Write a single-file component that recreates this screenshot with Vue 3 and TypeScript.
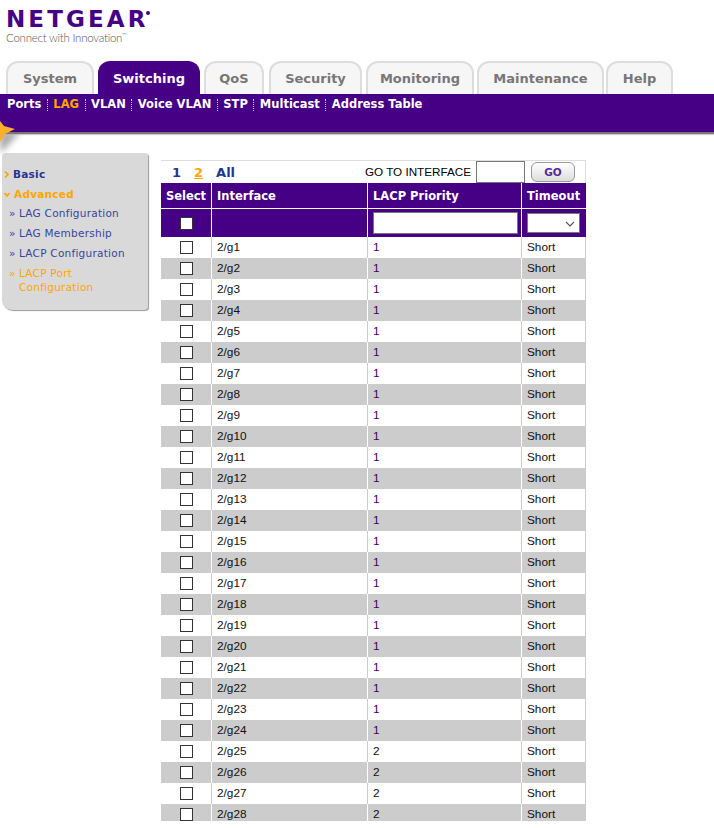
<script setup lang="ts">
interface Row { name: string; priority: number }
const rows: Row[] = Array.from({ length: 28 }, (_, i) => ({
  name: `2/g${i + 1}`,
  priority: i < 24 ? 1 : 2,
}))
const tabs = ['System', 'Switching', 'QoS', 'Security', 'Monitoring', 'Maintenance', 'Help']
const subs = ['Ports', 'LAG', 'VLAN', 'Voice VLAN', 'STP', 'Multicast', 'Address Table']
const links = ['LAG Configuration', 'LAG Membership', 'LACP Configuration']
</script>

<template>
  <div class="page">
    <header class="logo">
      <div class="brand">NETGEAR<i class="reg"></i></div>
      <div class="slogan">Connect with Innovation<sup>™</sup></div>
    </header>

    <nav class="tabs">
      <a v-for="t in tabs" :key="t" class="tab" :class="{ on: t === 'Switching' }">{{ t }}</a>
    </nav>
    <div class="bar">
      <template v-for="(s, i) in subs" :key="s">
        <span v-if="i" class="dot"></span>
        <a class="sub" :class="{ on: s === 'LAG' }">{{ s }}</a>
      </template>
    </div>
    <svg class="star" width="40" height="36" viewBox="0 0 40 36">
      <defs>
        <filter id="bl" x="-30%" y="-30%" width="160%" height="160%">
          <feGaussianBlur stdDeviation="3" />
        </filter>
        <clipPath id="below"><rect x="0" y="14" width="40" height="22" /></clipPath>
      </defs>
      <g clip-path="url(#below)">
        <path d="M0 12 L20 12 L4 30 L0 32 Z" fill="#aaa" filter="url(#bl)" />
      </g>
      <path d="M0 1 L4 6 L15 9 L5 14 L0 22 Z" fill="#f9ae2c" />
    </svg>

    <main class="main">
      <aside class="side">
        <div class="head"><svg class="mark" width="5" height="7" viewBox="0 0 5 7"><path d="M1 0.5 L4 3.5 L1 6.5" fill="none" stroke="#ffa500" stroke-width="1.6" /></svg>Basic</div>
        <div class="head active"><svg class="mark" width="6" height="5" viewBox="0 0 6 5"><path d="M0.5 1 L3 4 L5.5 1" fill="none" stroke="#ffa500" stroke-width="1.6" /></svg>Advanced</div>
        <a v-for="l in links" :key="l" class="link"><span class="raq">»</span><span>{{ l }}</span></a>
        <a class="link active"><span class="raq">»</span><span>LACP Port<br />Configuration</span></a>
      </aside>

      <section class="content">
        <div class="pager">
          <a class="pg first">1</a>
          <a class="pg cur">2</a>
          <a class="pg all">All</a>
          <span class="goto">GO TO INTERFACE</span>
          <input class="goin" type="text" />
          <button class="go" type="button">GO</button>
        </div>
        <table class="grid">
          <colgroup>
            <col class="c1" /><col class="c2" /><col class="c3" /><col class="c4" />
          </colgroup>
          <thead>
            <tr class="hd">
              <th class="center">Select</th>
              <th>Interface</th>
              <th>LACP Priority</th>
              <th>Timeout</th>
            </tr>
            <tr class="flt">
              <th class="center"><input class="ck" type="checkbox" /></th>
              <th></th>
              <th><input class="pri" type="text" /></th>
              <th>
                <div class="sel">
                  <svg width="10" height="6" viewBox="0 0 10 6"><path d="M1 1 L5 5 L9 1" fill="none" stroke="#555" stroke-width="1.1" /></svg>
                </div>
              </th>
            </tr>
          </thead>
          <tbody>
            <tr v-for="(r, i) in rows" :key="r.name" :class="i % 2 ? 'even' : 'odd'">
              <td class="center"><input class="ck" type="checkbox" /></td>
              <td class="txt">{{ r.name }}</td>
              <td class="txt" :class="{ one: r.priority === 1 }">{{ r.priority }}</td>
              <td class="txt">Short</td>
            </tr>
          </tbody>
        </table>
      </section>
    </main>
  </div>
</template>

<style scoped>
.page {
  position: relative;
  width: 714px;
  height: 828px;
  overflow: hidden;
  background: #fff;
  font-family: "Liberation Sans", Arial, sans-serif;
}
.logo { height: 61px; padding: 8px 0 0 6px; box-sizing: border-box; }
.brand {
  position: relative;
  font: 900 23px/23px "DejaVu Sans", sans-serif;
  letter-spacing: 3.1px;
  color: #460085;
  width: 146px;
  height: 23px;
  white-space: nowrap;
}
.reg { position: absolute; left: 140px; top: 3px; width: 4px; height: 4px; border-radius: 50%; background: #460085; }
.slogan { font: 300 11.5px/14px Lato, sans-serif; letter-spacing: -0.25px; color: #555; white-space: nowrap; }
.slogan sup { font-size: 6px; vertical-align: 5px; line-height: 0; }

.tabs { display: flex; gap: 4px; height: 33px; padding-left: 6px; }
.tab {
  box-sizing: border-box;
  height: 33px;
  padding: 7px 0 0;
  text-align: center;
  font: 700 13px/18px "DejaVu Sans", sans-serif;
  color: #777;
  background: #f6f6f6;
  border: 2px solid #ddd;
  border-bottom: 0;
  border-radius: 12px 12px 0 0;
}
.tab:nth-child(1) { width: 88px; }
.tab:nth-child(2) { width: 102px; }
.tab:nth-child(3) { width: 60px; }
.tab:nth-child(4) { width: 93px; margin-left: 1px; }
.tab:nth-child(5) { width: 108px; }
.tab:nth-child(6) { width: 127px; margin-left: -1px; }
.tab:nth-child(7) { width: 67px; margin-left: -2px; }
.tab.on { background: #460085; border-color: #460085; color: #fff; }

.bar {
  box-sizing: border-box;
  height: 40px;
  display: flex;
  align-items: flex-start;
  padding: 3px 0 0 7px;
  background: #460085;
  border-bottom: 2px solid #777;
  box-shadow: 0 1px 1px #ccc;
}
.sub { font: 700 11.5px/15px "DejaVu Sans", sans-serif; color: #fff; white-space: nowrap; }
.sub.on { color: #ffa500; }
.dot { width: 0; height: 12px; margin: 2px 5.5px 0; border-left: 1px dotted #ccc; }

.star { position: absolute; left: 0; top: 120px; }

.main { display: flex; align-items: flex-start; padding: 19px 0 0 2px; }
.side {
  box-sizing: border-box;
  flex: none;
  width: 146px;
  height: 157px;
  margin-right: 1px;
  padding: 11px 0 0 2px;
  background: #d9d9d9;
  border-radius: 4px 3px 4px 10px;
  box-shadow: 1px 1px 1px #999;
  font: 10.5px/20px "DejaVu Sans", sans-serif;
  letter-spacing: 0.25px;
}
.head { display: flex; align-items: center; gap: 4px; font-weight: 700; color: #2a3390; height: 20px; }
.head.active { color: #ffa500; margin-bottom: -1px; }
.head .mark { flex: none; }
.link { display: flex; gap: 4px; padding: 3px 0 3px 5px; color: #3a43a0; line-height: 14px; }
.link.active { color: #ffa500; }
.raq { flex: none; width: 6px; }

.content { margin: 7px 0 0 12px; width: 425px; height: 661px; overflow: hidden; }
.pager {
  box-sizing: border-box;
  height: 23px;
  display: flex;
  align-items: center;
  border-top: 1px solid #ddd;
  border-right: 1px solid #ddd;
}
.pg { font: 700 13px/16px "DejaVu Sans", sans-serif; color: #2a3390; padding-top: 2px; }
.first { margin-left: 11px; }
.cur { margin-left: 13px; color: #ffa500; text-decoration: underline; }
.all { margin-left: 13px; }
.goto { margin-left: auto; padding-bottom: 2px; font-size: 11.7px; color: #000; }
.goin {
  box-sizing: border-box;
  width: 49px;
  height: 22px;
  margin: 0 6px 0 5px;
  border: 1px solid #777;
  background: #fff;
  padding: 0;
}
.go {
  box-sizing: border-box;
  width: 44px;
  height: 20px;
  margin-right: 10px;
  padding: 0;
  border: 1px solid #999;
  border-radius: 6px;
  background: linear-gradient(#fff, #ddd);
  color: #5a2a96;
  font: 700 10.5px/18px "DejaVu Sans", sans-serif;
}

.grid {
  table-layout: fixed;
  width: 425px;
  border-collapse: separate;
  border-spacing: 0;
  font-size: 11.8px;
  color: #111;
}
.c1 { width: 50px; }
.c2 { width: 156px; }
.c3 { width: 154px; }
.c4 { width: 65px; }
th, td { padding: 0 0 0 5px; text-align: left; box-sizing: border-box; }
th + th, td + td { border-left: 1px solid #fff; }
.hd th {
  height: 26px;
  padding-top: 2px;
  background: #460085;
  color: #fff;
  font: 700 11.5px/15px "DejaVu Sans", sans-serif;
  border-bottom: 1px solid #fff;
}
.flt th { height: 28px; background: #460085; }
.center { padding: 0 0 0 1px; text-align: center; }
.hd th.center { padding: 2px 0 0; }
.flt th.center { padding: 0 0 0 1px; }
td.txt { padding-bottom: 2px; }
tbody tr { height: 21px; }
.odd td { background: #fff; }
.odd td + td { border-left-color: #ccc; }
.odd td:last-child { border-right: 1px solid #ccc; }
.even td { background: #ccc; }
.one { color: #3c0060; }
.ck {
  appearance: none;
  display: block;
  margin: 0 auto;
  width: 13px;
  height: 13px;
  box-sizing: border-box;
  border: 1px solid #333;
  background: #fff;
  border-radius: 0;
}
.pri {
  display: block;
  box-sizing: border-box;
  width: 145px;
  height: 22px;
  border: 1px solid #777;
  background: #fff;
  padding: 0;
}
.sel {
  box-sizing: border-box;
  width: 53px;
  height: 20px;
  padding: 7px 4px 0 0;
  text-align: right;
  background: #fff;
  border: 1px solid #777;
  line-height: 0;
}
</style>
